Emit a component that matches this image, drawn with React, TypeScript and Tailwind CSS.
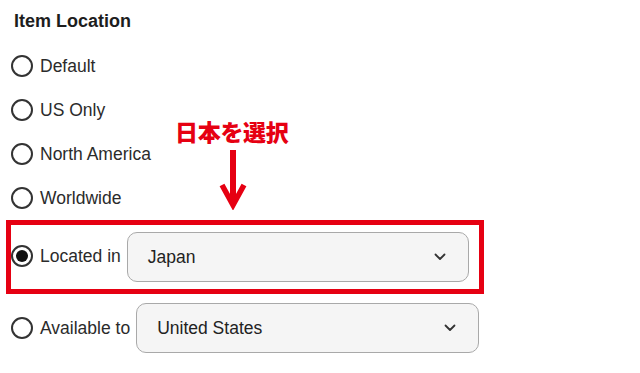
import React from 'react';

const OPTIONS = ['Default', 'US Only', 'North America', 'Worldwide'];

function Radio({ checked = false }: { checked?: boolean }) {
  return (
    <span className="w-[22px] h-[22px] rounded-full border-2 border-[#333] flex items-center justify-center shrink-0 bg-white">
      {checked && <span className="w-[12px] h-[12px] rounded-full bg-[#111]" />}
    </span>
  );
}

function Chevron() {
  return (
    <svg width="12" height="8" viewBox="0 0 12 8" fill="none">
      <path d="M1.5 1.5 L6 6 L10.5 1.5" stroke="#333" strokeWidth="1.8" strokeLinecap="round" strokeLinejoin="round" />
    </svg>
  );
}

function Select({ value, width }: { value: string; width: string }) {
  return (
    <div className={`h-[50px] ${width} rounded-[10px] border border-[#a9a9a9] bg-[#f5f5f5] flex items-center justify-between pl-[20px] pr-[22px] text-[#222]`}>
      <span>{value}</span>
      <Chevron />
    </div>
  );
}

export default function App() {
  return (
    <div className="relative w-[640px] h-[373px] bg-white overflow-hidden text-[17.5px] text-[#2b2b2b]" style={{ fontFamily: '"Liberation Sans", Arial, sans-serif' }}>
      <div className="pt-[9px] pl-[14px] h-[33px] text-[18px] font-bold text-[#1d1d1d] leading-[24px]">Item Location</div>

      <div className="mt-[11px] flex flex-col">
        {OPTIONS.map(o => (
          <div key={o} className="h-[44px] pl-[11px] flex items-center gap-[7px]">
            <Radio />
            <span>{o}</span>
          </div>
        ))}

        {/* highlighted row */}
        <div className="ml-[6px] w-[478px] h-[74px] border-[5px] border-[#e60012] flex items-center">
          <div className="flex items-center gap-[7px] mt-[-2px]">
            <Radio checked />
            <span>Located in</span>
          </div>
          <div className="ml-[6px]">
            <Select value="Japan" width="w-[342px]" />
          </div>
        </div>

        <div className="mt-[9px] pl-[11px] flex items-center">
          <div className="flex items-center gap-[7px]">
            <Radio />
            <span>Available to</span>
          </div>
          <div className="ml-[6px]">
            <Select value="United States" width="w-[343px]" />
          </div>
        </div>
      </div>

      {/* annotation */}
      <div className="absolute left-[175px] top-[117px] text-[23px] font-black text-[#e60012] leading-[28px] tracking-[-0.3px]" style={{ fontFamily: '"Noto Sans CJK JP", sans-serif' }}>
        日本を選択
      </div>
      <svg className="absolute left-[219px] top-[150px]" width="28" height="60" viewBox="0 0 28 60">
        <path d="M14 0 V50" stroke="#e60012" strokeWidth="6" />
        <path d="M3 35 L14 55 L25 35" stroke="#e60012" strokeWidth="5.5" fill="none" strokeLinejoin="miter" />
      </svg>
    </div>
  );
}
